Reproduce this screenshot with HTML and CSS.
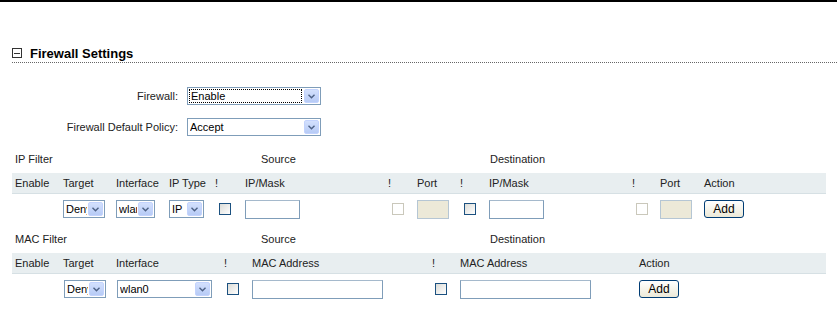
FILE: index.html
```html
<!DOCTYPE html>
<html lang="en">
<head>
    <meta charset="UTF-8">
    <title>Firewall Settings</title>
    <link rel="stylesheet" href="styles.css">
</head>
<body>
    <div class="topbar"></div>
    <div class="page">
        <!-- Section title -->
        <h2 class="title">
            <span class="toggle"><span class="minus"></span></span>
            Firewall Settings
        </h2>

        <!-- General settings -->
        <div class="form">
            <label class="form-label">Firewall:</label>
            <span class="sel sel-wide focus">
                <select><option>Enable</option><option>Disable</option></select>
                <span class="arr"><svg width="7" height="5" viewBox="0 0 7 5"><path d="M0.5 0.8 L3.5 3.8 L6.5 0.8" fill="none" stroke="#4d6185" stroke-width="1.4"/></svg></span>
            </span>
            <label class="form-label">Firewall Default Policy:</label>
            <span class="sel sel-wide">
                <select><option>Accept</option><option>Drop</option></select>
                <span class="arr"><svg width="7" height="5" viewBox="0 0 7 5"><path d="M0.5 0.8 L3.5 3.8 L6.5 0.8" fill="none" stroke="#4d6185" stroke-width="1.4"/></svg></span>
            </span>
        </div>

        <!-- IP Filter -->
        <div class="filter">
            <div class="caption">
                <span class="cap-name">IP Filter</span>
                <span class="cap-src">Source</span>
                <span class="cap-dst">Destination</span>
            </div>
            <div class="grid grid-ip head">
                <span>Enable</span>
                <span>Target</span>
                <span>Interface</span>
                <span>IP Type</span>
                <span>!</span>
                <span>IP/Mask</span>
                <span>!</span>
                <span>Port</span>
                <span>!</span>
                <span>IP/Mask</span>
                <span>!</span>
                <span>Port</span>
                <span>Action</span>
            </div>
            <div class="grid grid-ip row">
                <span></span>
                <span><span class="sel w42"><select><option>Deny</option><option>Accept</option></select><span class="arr"><svg width="7" height="5" viewBox="0 0 7 5"><path d="M0.5 0.8 L3.5 3.8 L6.5 0.8" fill="none" stroke="#4d6185" stroke-width="1.4"/></svg></span></span></span>
                <span><span class="sel w39"><select><option>wlan0</option></select><span class="arr"><svg width="7" height="5" viewBox="0 0 7 5"><path d="M0.5 0.8 L3.5 3.8 L6.5 0.8" fill="none" stroke="#4d6185" stroke-width="1.4"/></svg></span></span></span>
                <span><span class="sel w35"><select><option>IP</option></select><span class="arr"><svg width="7" height="5" viewBox="0 0 7 5"><path d="M0.5 0.8 L3.5 3.8 L6.5 0.8" fill="none" stroke="#4d6185" stroke-width="1.4"/></svg></span></span></span>
                <span class="cb-cell"><input type="checkbox" class="cb"></span>
                <span><input type="text" class="txt w55"></span>
                <span class="cb-cell"><input type="checkbox" class="cb" disabled></span>
                <span><input type="text" class="txt w32" disabled></span>
                <span class="cb-cell"><input type="checkbox" class="cb"></span>
                <span><input type="text" class="txt w55"></span>
                <span class="cb-cell"><input type="checkbox" class="cb" disabled></span>
                <span><input type="text" class="txt w32" disabled></span>
                <span><button class="btn">Add</button></span>
            </div>
        </div>

        <!-- MAC Filter -->
        <div class="filter">
            <div class="caption">
                <span class="cap-name">MAC Filter</span>
                <span class="cap-src">Source</span>
                <span class="cap-dst">Destination</span>
            </div>
            <div class="grid grid-mac head">
                <span>Enable</span>
                <span>Target</span>
                <span>Interface</span>
                <span>!</span>
                <span>MAC Address</span>
                <span>!</span>
                <span>MAC Address</span>
                <span>Action</span>
            </div>
            <div class="grid grid-mac row">
                <span></span>
                <span class="sel-cell"><span class="sel w42"><select><option>Deny</option><option>Accept</option></select><span class="arr"><svg width="7" height="5" viewBox="0 0 7 5"><path d="M0.5 0.8 L3.5 3.8 L6.5 0.8" fill="none" stroke="#4d6185" stroke-width="1.4"/></svg></span></span></span>
                <span class="sel-cell"><span class="sel w95"><select><option>wlan0</option></select><span class="arr"><svg width="7" height="5" viewBox="0 0 7 5"><path d="M0.5 0.8 L3.5 3.8 L6.5 0.8" fill="none" stroke="#4d6185" stroke-width="1.4"/></svg></span></span></span>
                <span class="cb-cell"><input type="checkbox" class="cb"></span>
                <span><input type="text" class="txt w131"></span>
                <span class="cb-cell"><input type="checkbox" class="cb"></span>
                <span><input type="text" class="txt w131"></span>
                <span><button class="btn">Add</button></span>
            </div>
        </div>
    </div>
</body>
</html>
```

FILE: styles.css
```css
body {
    margin: 0;
    font-family: "Liberation Sans", Arial, sans-serif;
    font-size: 11px;
    color: #222;
    background-color: #fff;
}

.topbar {
    height: 2px;
    background-color: #000;
}

.page {
    padding-left: 12px;
}

/* Section title */
.title {
    display: flex;
    align-items: center;
    margin: 43px 0 0 0;
    height: 16px;
    padding-bottom: 1px;
    border-bottom: 1px dotted #666;
    font-size: 13px;
    font-weight: bold;
    color: #000;
}

.toggle {
    display: inline-flex;
    align-items: center;
    justify-content: center;
    box-sizing: border-box;
    width: 10px;
    height: 10px;
    margin-right: 8px;
    border: 1px solid #333;
}

.minus {
    width: 6px;
    height: 1px;
    background-color: #333;
}

/* General settings */
.form {
    display: grid;
    grid-template-columns: 166px auto;
    column-gap: 9px;
    row-gap: 13px;
    justify-items: start;
    align-items: center;
    margin-top: 24px;
}

.form-label {
    justify-self: end;
}

.sel {
    display: inline-flex;
    box-sizing: border-box;
    height: 18px;
    border: 1px solid #7f9db9;
    background-color: #fff;
    vertical-align: middle;
}

.sel select {
    appearance: none;
    -webkit-appearance: none;
    flex: 1;
    min-width: 0;
    border: none;
    margin: 0;
    padding: 0 0 0 2px;
    font-family: inherit;
    font-size: 11px;
    color: #000;
    background: transparent;
    outline: none;
}

.sel.focus select {
    outline: 1px dotted #000;
    outline-offset: -1px;
    margin: 1px;
}

.arr {
    display: flex;
    align-items: center;
    justify-content: center;
    width: 15px;
    margin: 1px;
    border: 1px solid #c3d3fd;
    border-radius: 2px;
    background: linear-gradient(#d3e0fd, #b7cbf6);
    box-sizing: border-box;
}

.sel-wide { width: 134px; }
.w42 { width: 42px; }
.w39 { width: 39px; }
.w35 { width: 35px; }
.w95 { width: 95px; }

/* Filters */
.filter {
    width: 814px;
}

.caption {
    display: flex;
    height: 14px;
    line-height: 14px;
    margin-top: 16px;
    margin-bottom: 7px;
}

.filter + .filter .caption {
    margin-top: 8px;
}

.cap-name {
    width: 246px;
    padding-left: 3px;
}

.cap-src {
    width: 229px;
}

.grid {
    display: grid;
    align-items: center;
    padding-left: 3px;
}

.grid-ip {
    grid-template-columns: 48px 53px 53px 46px 30px 143px 29px 43px 29px 143px 28px 44px 1fr;
}

.grid-mac {
    grid-template-columns: 48px 53px 108px 28px 180px 28px 179px 1fr;
}

.head {
    height: 20px;
    background-color: #e8eef0;
    border-bottom: 1px solid #d6e0e4;
}

.row {
    height: 30px;
}

.sel-cell {
    padding-left: 1px;
}

.cb-cell {
    padding-left: 4px;
}

.grid-mac .cb-cell {
    padding-left: 3px;
}

.cb {
    appearance: none;
    -webkit-appearance: none;
    display: block;
    width: 12px;
    height: 12px;
    margin: 0;
    border: 1px solid #1c5180;
    background: linear-gradient(135deg, #dcdcd7, #fff);
}

.cb:disabled {
    border-color: #cac8bb;
    background: #fff;
}

.txt {
    display: block;
    box-sizing: border-box;
    height: 19px;
    margin: 0;
    padding: 0 2px;
    border: 1px solid #7f9db9;
    border-top-color: #a5b9cc;
    font-family: inherit;
    font-size: 11px;
    background-color: #fff;
}

.txt:disabled {
    background-color: #ece9d8;
    border-color: #b5c6d4;
}

.w55 { width: 55px; }
.w32 { width: 32px; }
.w131 { width: 131px; }

.btn {
    display: block;
    box-sizing: border-box;
    width: 40px;
    height: 18px;
    padding: 0;
    border: 1px solid #003c74;
    border-radius: 3px;
    background: linear-gradient(#fff, #ece9d8);
    font-family: inherit;
    font-size: 12px;
    color: #000;
}
```
